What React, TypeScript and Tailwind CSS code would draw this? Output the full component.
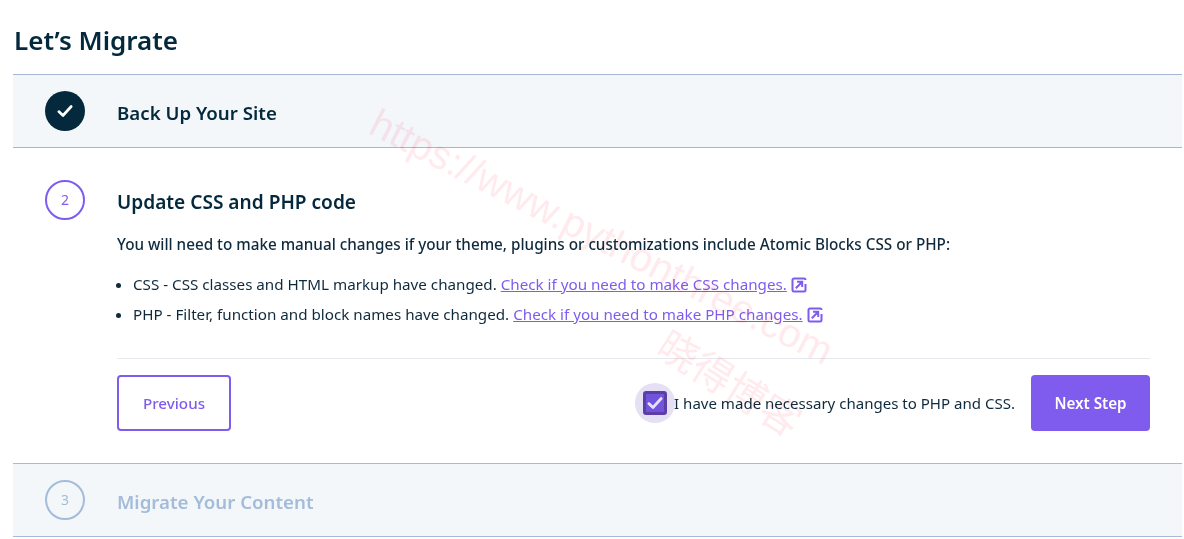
const font = "font-['Noto_Sans',sans-serif]";

function ExternalIcon() {
  return (
    <svg viewBox="0 0 16 16" className="ml-1 inline-block h-4 w-4 align-[-3px]" fill="none" stroke="#7f5ced" strokeWidth="2">
      <path d="M3 1.5h10A1.5 1.5 0 0 1 14.5 3M14.5 7v6A1.5 1.5 0 0 1 13 14.5H3A1.5 1.5 0 0 1 1.5 13V3A1.5 1.5 0 0 1 3 1.5" />
      <path d="M4.8 11.2 10.8 5.2M6 4.8h5.2V10" />
    </svg>
  );
}

function Check({ size, color }: { size: string; color: string }) {
  return (
    <svg viewBox="0 0 16 16" className={size} fill="none" stroke={color} strokeWidth="2.4" strokeLinecap="round" strokeLinejoin="round">
      <path d="M2.5 8.5 6.2 12 13.5 4" />
    </svg>
  );
}

export default function App() {
  return (
    <div className={`relative h-[539px] w-[1184px] overflow-hidden bg-white pl-[13px] pr-[2px] text-[#0f2a3d] ${font}`}>
      <h1 className="pb-[14px] pl-px pt-5 text-[26px] font-semibold leading-[40px] text-[#04293c]">Let’s Migrate</h1>

      {/* step 1 */}
      <div className="flex h-[74px] items-center border-y border-[#a3b6d4] bg-[#f4f7fa] pl-8">
        <div className="flex h-10 w-10 items-center justify-center rounded-full bg-[#04293c]">
          <Check size="h-[18px] w-[18px]" color="#fff" />
        </div>
        <h2 className="ml-8 pt-1 text-[18.7px] font-semibold text-[#04293c]">Back Up Your Site</h2>
      </div>

      {/* step 2 */}
      <div className="pb-8 pl-8 pr-8 pt-[32px]">
        <div className="flex h-10 items-center">
          <div className="flex h-10 w-10 items-center justify-center rounded-full border-2 border-[#7f5ced] text-sm text-[#7f5ced]">2</div>
          <h2 className="ml-8 pt-1 text-[19.1px] font-semibold text-[#04293c]">Update CSS and PHP code</h2>
        </div>
        <div className="ml-[72px]">
          <p className="mt-[12px] text-[15.25px] font-medium leading-6 text-[#0f2a3d]">
            You will need to make manual changes if your theme, plugins or customizations include Atomic Blocks CSS or PHP:
          </p>
          <ul className="mt-[13px] list-disc pl-4 text-[15.2px] leading-[30px]">
            <li>
              CSS - CSS classes and HTML markup have changed.{" "}
              <a className="text-[#7f5ced] underline">Check if you need to make CSS changes.</a>
              <ExternalIcon />
            </li>
            <li>
              PHP - Filter, function and block names have changed.{" "}
              <a className="text-[#7f5ced] underline">Check if you need to make PHP changes.</a>
              <ExternalIcon />
            </li>
          </ul>
          <div className="mt-[29px] flex items-center justify-between border-t border-[#e6e9ee] pt-4">
            <button className="h-14 w-[114px] rounded border-2 border-[#7f5ced] text-[15.2px] font-medium text-[#7f5ced]">Previous</button>
            <div className="flex items-center">
              <span className="flex h-10 w-10 items-center justify-center rounded-full bg-[#e5e0f3]">
                <span className="flex h-6 w-6 items-center justify-center rounded-[3px] border-[3px] border-[#5b3fa6] bg-[#7054dc]">
                  <Check size="h-[18px] w-[18px]" color="#e8e2f8" />
                </span>
              </span>
              <span className="ml-[-1px] text-[15.05px]">I have made necessary changes to PHP and CSS.</span>
              <button className="ml-4 h-14 w-[119px] rounded bg-[#7f5ced] text-[15.2px] font-semibold text-white">Next Step</button>
            </div>
          </div>
        </div>
      </div>

      {/* step 3 */}
      <div className="flex h-[74px] items-center border-y border-[#a3bcd9] bg-[#f4f7fa] pl-8">
        <div className="flex h-10 w-10 items-center justify-center rounded-full border-2 border-[#a3bcd9] text-sm text-[#a3bcd9]">3</div>
        <h2 className="ml-8 pt-1 text-[18.7px] font-semibold text-[#a3bcd9]">Migrate Your Content</h2>
      </div>

      {/* watermark */}
      <div className="pointer-events-none absolute left-[373px] top-[100px] origin-left rotate-[27deg] whitespace-nowrap font-['Liberation_Sans',sans-serif] text-[40px] leading-none text-[#ffeaed] mix-blend-multiply">
        https://www.pythonthree.com
      </div>
      <div className="pointer-events-none absolute left-[663px] top-[319px] origin-left rotate-[32deg] whitespace-nowrap font-['Noto_Sans_CJK_SC',sans-serif] text-[40px] leading-none text-[#ffeaed] mix-blend-multiply">
        晓得博客
      </div>
    </div>
  );
}
